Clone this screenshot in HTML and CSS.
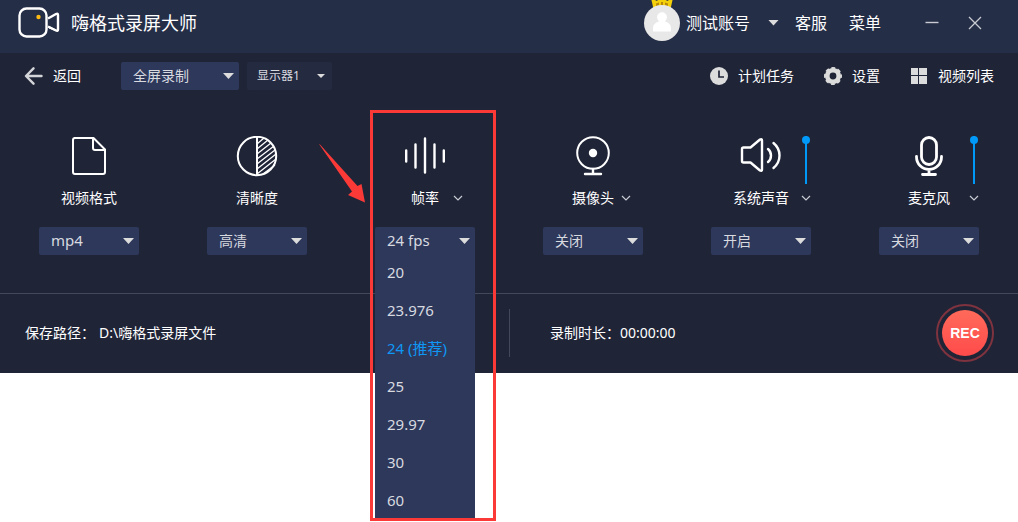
FILE: index.html
```html
<!DOCTYPE html>
<html lang="zh-CN">
<head>
<meta charset="utf-8">
<meta name="viewport" content="width=device-width, initial-scale=1">
<title>嗨格式录屏大师</title>
<link rel="stylesheet" href="styles.css">
</head>
<body>
<div class="app">
  <header class="titlebar">
    <svg class="logo" width="42" height="34" viewBox="0 0 42 34" fill="none" stroke="#fff" stroke-width="2.400" stroke-linejoin="round" aria-hidden="true">
      <rect x="1.500" y="2.500" width="27" height="28" rx="7"/>
      <path d="M30 12.500L38 8Q40 7 40 9V23.500Q40 25.500 38 24.500L30 20.500"/>
      <path d="M31 20.500L39 24.500V25L31 22Z" fill="#fff" stroke-width="1"/>
      <circle cx="20.500" cy="11" r="2.200" fill="#fdb913" stroke="none"/>
    </svg>
    <h1 class="title">嗨格式录屏大师</h1>
    <button class="account" type="button">
      <span class="avatar">
        <svg class="crown" width="22" height="14" viewBox="0 0 22 14" aria-hidden="true">
          <path d="M0 3L6 6L11 0L16 6L22 3L19.500 14H2.500Z" fill="#f3d00a"/>
          <path d="M5 8.500L8 7.500V10.500L5 11ZM10 7H12V10H10ZM14 7.500L17 8.500V11L14 10.500Z" fill="#b98905"/>
        </svg>
        <svg class="face" width="36" height="36" viewBox="0 0 36 36" aria-hidden="true">
          <circle cx="18" cy="18" r="18" fill="#e8e8e8"/>
          <path d="M9 26V23.500Q9 17.800 15 16.500Q13 14.500 13 12.200A5 5 0 0 1 23 12.200Q23 14.500 21 16.500Q27 17.800 27 23.500V26Q27 26.500 26.500 26.500H9.500Q9 26.500 9 26Z" fill="#fff"/>
        </svg>
      </span>
      <span>测试账号</span>
      <span class="caret"></span>
    </button>
    <nav class="links">
      <a href="#support">客服</a>
      <a href="#menu">菜单</a>
    </nav>
    <div class="window-buttons">
      <button type="button" aria-label="最小化"><svg width="14" height="14" viewBox="0 0 14 14" stroke="#c9ccd3" stroke-width="1.400" aria-hidden="true"><path d="M0.500 6.500H13.500"/></svg></button>
      <button type="button" aria-label="关闭窗口"><svg width="14" height="14" viewBox="0 0 14 14" stroke="#c9ccd3" stroke-width="1.300" aria-hidden="true"><path d="M1 1L13 13M13 1L1 13"/></svg></button>
    </div>
  </header>

  <div class="toolbar">
    <button class="tool back" type="button">
      <svg width="19" height="18" viewBox="0 0 19 18" fill="none" stroke="#d4d5d8" stroke-width="2.400" stroke-linecap="round" stroke-linejoin="round" aria-hidden="true"><path d="M9.500 1.300L2 9L9.500 16.700M2.500 9H17.500"/></svg>
      <span>返回</span>
    </button>
    <div class="picker picker-mode">
      <select aria-label="录制模式"><option>全屏录制</option></select>
    </div>
    <div class="picker picker-screen">
      <select aria-label="显示器"><option>显示器1</option></select>
    </div>
    <div class="tools">
      <button class="tool" type="button">
        <svg width="18" height="18" viewBox="0 0 18 18" aria-hidden="true"><circle cx="9" cy="9" r="9" fill="#dcdcdc"/><path d="M9 3.500V10H14" fill="none" stroke="#1f2437" stroke-width="1.700"/></svg>
        <span>计划任务</span>
      </button>
      <button class="tool" type="button">
        <svg width="18" height="18" viewBox="0 0 18 18" aria-hidden="true">
          <g fill="none" stroke="#dcdcdc"><circle cx="9" cy="9" r="5.700" stroke-width="4.600"/><circle cx="9" cy="9" r="8.100" stroke-width="1.800" stroke-dasharray="3.800 2.562" stroke-dashoffset="1.900"/></g>
        </svg>
        <span>设置</span>
      </button>
      <button class="tool" type="button">
        <svg width="18" height="18" viewBox="0 0 18 18" fill="#dcdcdc" aria-hidden="true"><path d="M1 1H8V8H1ZM9 1H17V8H9ZM1 9H8V17H1ZM9 9H17V17H9Z"/></svg>
        <span>视频列表</span>
      </button>
    </div>
  </div>

  <main class="settings">
    <section class="setting">
      <div class="head">
        <svg class="icon" width="42" height="42" viewBox="0 0 42 42" fill="none" stroke="#fff" stroke-width="2" stroke-linejoin="round" aria-hidden="true">
          <path d="M6 2H25.500L37 13.500V36Q37 38 35 38H7Q5 38 5 36V4Q5 2 7 2"/><path d="M25 2V12Q25 14 27 14H37"/>
        </svg>
        <label class="name" for="format">视频格式</label>
      </div>
      <div class="picker latin"><select id="format"><option>mp4</option></select></div>
    </section>

    <section class="setting">
      <div class="head">
        <svg class="icon" width="42" height="42" viewBox="0 0 42 42" fill="none" stroke="#fff" stroke-width="2" aria-hidden="true">
          <circle cx="21" cy="20" r="19.200"/><path d="M21 1V39"/>
          <path d="M21 8L28 2M21 13L32 4M21 18L35 7M21 23L38 10M21 28L39 14M21 33L40 18M21 38L40 23M27 38L39 29" stroke-width="1.300"/>
        </svg>
        <label class="name" for="quality">清晰度</label>
      </div>
      <div class="picker"><select id="quality"><option>高清</option></select></div>
    </section>

    <section class="setting">
      <div class="head">
        <svg class="icon" width="42" height="42" viewBox="0 0 42 42" fill="none" stroke="#fff" stroke-width="2.400" stroke-linecap="round" aria-hidden="true">
          <path d="M2.200 14.500V25.500M11.500 8.500V31.500M21 2.500V36.500M30.500 8.500V31.500M39.800 14.500V25.500"/>
        </svg>
        <label class="name" for="fps">帧率</label>
        <button class="more" type="button" aria-label="帧率选项"><svg width="10" height="10" viewBox="0 0 10 10" fill="none" stroke="#c9ccd3" stroke-width="1.200" aria-hidden="true"><path d="M1 3L5 7L9 3"/></svg></button>
      </div>
      <div class="picker latin">
        <select id="fps"><option>24 fps</option></select>
        <ul class="menu">
          <li>20</li>
          <li>23.976</li>
          <li class="chosen">24 (推荐)</li>
          <li>25</li>
          <li>29.97</li>
          <li>30</li>
          <li>60</li>
        </ul>
      </div>
      <div class="highlight"></div>
      <svg class="pointer" width="47" height="59" viewBox="0 0 47 59" fill="#fb3a38" aria-hidden="true"><path d="M0 0L1 0.500L38.500 42L42.500 40L46 58.500L29 51L33 47.500Z"/></svg>
    </section>

    <section class="setting">
      <div class="head">
        <svg class="icon" width="42" height="42" viewBox="0 0 42 42" fill="none" stroke="#fff" stroke-width="2" aria-hidden="true">
          <circle cx="21" cy="17" r="15.800"/><circle cx="21" cy="17" r="4.200" fill="#fff" stroke="none"/><path d="M21 33V38M13 38H29" stroke-width="2.400" stroke-linecap="round"/>
        </svg>
        <label class="name" for="camera">摄像头</label>
        <button class="more" type="button" aria-label="摄像头选项"><svg width="10" height="10" viewBox="0 0 10 10" fill="none" stroke="#c9ccd3" stroke-width="1.200" aria-hidden="true"><path d="M1 3L5 7L9 3"/></svg></button>
      </div>
      <div class="picker"><select id="camera"><option>关闭</option></select></div>
    </section>

    <section class="setting">
      <div class="head head-wide">
        <svg class="icon" width="42" height="42" viewBox="0 0 42 42" fill="none" stroke="#fff" stroke-width="2.400" stroke-linecap="round" stroke-linejoin="round" aria-hidden="true">
          <path d="M3.500 11.500H10.500L20 3.500Q22 2.500 22 4.500V33.500Q22 35.500 20 34.500L10.500 26.500H3.500Q2 26.500 2 25V13Q2 11.500 3.500 11.500Z"/>
          <path d="M28 13Q31 15.500 31 19.500T28 26M33.500 7Q39.500 12 39.500 19.500T33.500 32"/>
        </svg>
        <input class="volume" type="range" min="0" max="100" value="100" aria-label="系统声音音量">
        <label class="name" for="system">系统声音</label>
        <button class="more" type="button" aria-label="系统声音选项"><svg width="10" height="10" viewBox="0 0 10 10" fill="none" stroke="#c9ccd3" stroke-width="1.200" aria-hidden="true"><path d="M1 3L5 7L9 3"/></svg></button>
      </div>
      <div class="picker"><select id="system"><option>开启</option></select></div>
    </section>

    <section class="setting">
      <div class="head head-wide">
        <svg class="icon" width="42" height="42" viewBox="0 0 42 42" fill="none" stroke="#fff" stroke-width="2.800" stroke-linecap="round" aria-hidden="true">
          <rect x="13.500" y="1.500" width="15" height="27" rx="7.500"/><path d="M8.500 20.500V21A12.500 12.500 0 0 0 33.500 21V20.500M21 33.500V38M14.500 38.500H27.500"/>
        </svg>
        <input class="volume" type="range" min="0" max="100" value="100" aria-label="麦克风音量">
        <label class="name" for="mic">麦克风</label>
        <button class="more" type="button" aria-label="麦克风选项"><svg width="10" height="10" viewBox="0 0 10 10" fill="none" stroke="#c9ccd3" stroke-width="1.200" aria-hidden="true"><path d="M1 3L5 7L9 3"/></svg></button>
      </div>
      <div class="picker"><select id="mic"><option>关闭</option></select></div>
    </section>
  </main>

  <footer class="status">
    <div class="path"><span>保存路径：</span><span>D:\嗨格式录屏文件</span></div>
    <div class="duration">
      <span>录制时长：00:00:00</span>
      <button class="record" type="button"><span>REC</span></button>
    </div>
  </footer>
</div>
</body>
</html>
```
FILE: styles.css
```css
* {
  box-sizing: border-box;
}

body {
  min-height: 100vh;
  margin: 0;
  background: #fff;
  color: #fff;
  font-family: "Noto Sans", "Noto Sans CJK SC", sans-serif;
  font-size: 14px;
  line-height: 20px;
}

button,
select {
  margin: 0;
  padding: 0;
  border: 0;
  background: none;
  color: inherit;
  font: inherit;
}

svg {
  display: block;
  flex: none;
}

.app {
  background: #1f2437;
}

/* Title bar */
.titlebar {
  display: flex;
  align-items: center;
  height: 53px;
  padding: 0 36px 8px 18px;
  background: #252e47;
}

.title {
  margin: 0 auto 0 11px;
  font-size: 18px;
  font-weight: 400;
  line-height: 24px;
}

.account {
  display: flex;
  align-items: center;
  gap: 6px;
  font-size: 16px;
  line-height: 24px;
}

.avatar {
  position: relative;
}

.crown {
  position: absolute;
  top: -10px;
  left: 7px;
}

.face {
  position: relative;
}

.caret {
  width: 11px;
  height: 6px;
  margin-left: 12px;
  background: #dcdcdc;
  clip-path: polygon(0 0, 100% 0, 50% 100%);
}

.links {
  display: flex;
  gap: 22px;
  margin: 0 44px 0 16px;
  font-size: 16px;
  line-height: 24px;
}

.links a {
  color: inherit;
  text-decoration: none;
}

.window-buttons {
  display: flex;
  gap: 29px;
}

/* Toolbar */
.toolbar {
  display: flex;
  align-items: center;
  padding: 9px 24px;
}

.tool {
  display: flex;
  align-items: center;
  gap: 10px;
}

.back {
  margin-right: 40px;
}

.tools {
  display: flex;
  gap: 30px;
  margin-left: auto;
}

.picker {
  position: relative;
  width: 100px;
  height: 28px;
  border-radius: 2px;
  background: #2d385a;
  color: #d8dae0;
}

.picker::after {
  content: "";
  position: absolute;
  top: 11px;
  right: 5px;
  width: 11px;
  height: 6px;
  background: #dcdcdc;
  clip-path: polygon(0 0, 100% 0, 50% 100%);
  pointer-events: none;
}

.picker select {
  display: block;
  width: 100%;
  height: 100%;
  padding: 0 20px 0 12px;
  appearance: none;
}

.picker.latin {
  font-size: 15px;
}

.picker.latin select {
  padding-bottom: 2px;
}

.picker-mode {
  width: 118px;
  margin-right: 8px;
}

.picker-screen {
  width: 85px;
  background: #242b41;
  font-size: 12px;
}

.picker-screen select {
  padding-left: 10px;
}

.picker-screen::after {
  top: 12px;
  right: 7px;
  width: 8px;
  height: 4px;
}

/* Recording settings */
.settings {
  display: grid;
  grid-template-columns: repeat(6, 1fr);
  padding: 37px 5px 38px;
}

.setting {
  position: relative;
  display: flex;
  flex-direction: column;
  align-items: center;
  gap: 19px;
}

.head {
  display: grid;
  grid-template-columns: 1fr 56px 1fr;
  grid-template-rows: 48px 20px;
  row-gap: 4px;
  width: 100%;
}

.head-wide {
  grid-template-columns: 1fr 80px 1fr;
}

.icon {
  grid-area: 1 / 2;
  justify-self: center;
}

.name {
  grid-area: 2 / 2;
  justify-self: center;
}

.more {
  grid-area: 2 / 3;
  place-self: center start;
}

.volume {
  grid-area: 1 / 3;
  width: 10px;
  height: 48px;
  margin: 0;
  appearance: none;
  writing-mode: vertical-lr;
  direction: rtl;
  background: linear-gradient(#0099f7, #0099f7) center / 2px 100% no-repeat;
}

.volume::-webkit-slider-thumb {
  width: 8px;
  height: 8px;
  border-radius: 50%;
  appearance: none;
  background: #0099f7;
}

.menu {
  position: absolute;
  z-index: 1;
  top: 26px;
  left: 0;
  width: 100%;
  margin: 0;
  padding: 0;
  list-style: none;
  background: #2d385a;
}

.menu li {
  padding: 9px 12px;
}

.menu .chosen {
  color: #0f97f5;
}

.highlight {
  position: absolute;
  z-index: 2;
  top: -26px;
  left: 50%;
  width: 126px;
  height: 411px;
  margin-left: -55px;
  border: 3px solid #fb3a38;
  pointer-events: none;
}

.pointer {
  position: absolute;
  top: 8px;
  right: calc(50% + 59px);
}

/* Status bar */
.status {
  display: grid;
  grid-template-columns: 1fr 1fr;
  align-items: center;
  height: 80px;
  padding-bottom: 2px;
  border-top: 1px solid #444959;
}

.path {
  display: flex;
  gap: 4px;
  padding-left: 25px;
}

.duration {
  display: flex;
  align-items: center;
  justify-content: space-between;
  height: 48px;
  padding: 0 24px 0 40px;
  border-left: 1px solid #444959;
}

.record {
  padding: 4px;
  border: 2px solid #7f333f;
  border-radius: 50%;
  font: 700 14px/46px "Liberation Sans", sans-serif;
}

.record span {
  display: block;
  width: 46px;
  height: 46px;
  border-radius: 50%;
  background: linear-gradient(#ff6a5a, #ff4b4b);
}
```
